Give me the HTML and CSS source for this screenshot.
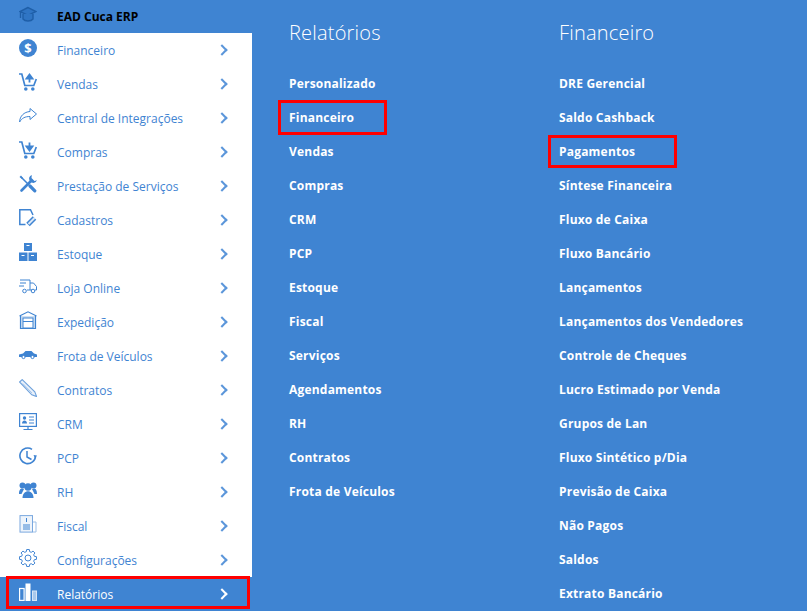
FILE: index.html
```html
<!DOCTYPE html>
<html lang="en">
<head>
  <meta charset="UTF-8" />
  <title>EAD Cuca ERP</title>
  <link rel="stylesheet" href="styles.css">
</head>
<body>
  <div class="app">
    <aside class="sidebar">
      <div class="brand">
        <svg class="ico brand-ico" viewBox="0 0 18 18"><path d="M9 1.500 1 5.500 9 9.500l8-4z" fill="#2f75c4" stroke="currentColor" stroke-width="1.400"/><path d="M4 8v5c2 2.600 8 2.600 10 0V8" fill="#2f75c4" stroke="currentColor" stroke-width="1.400"/><path d="M1.500 6v6" stroke="currentColor" stroke-width="1.400"/></svg>
        <span>EAD Cuca ERP</span>
      </div>
      <nav class="menu">
        <a class="item"><svg class="ico" viewBox="0 0 18 18"><circle cx="9" cy="9" r="9" fill="currentColor"/><text x="9" y="13.500" class="dollar">$</text></svg><span class="label">Financeiro</span><i class="chev"></i></a>
        <a class="item"><svg class="ico" viewBox="0 0 18 18"><path d="M0 1h2.800l3 11.500h9L17.300 6" fill="none" stroke="currentColor" stroke-width="1.700"/><path d="M10.500 9.500V5M7.500 5.500 10.500 1.500l3 4z" fill="currentColor" stroke="currentColor" stroke-width="1.800"/><circle cx="6.800" cy="16" r="1.800" fill="currentColor"/><circle cx="13.800" cy="16" r="1.800" fill="currentColor"/></svg><span class="label">Vendas</span><i class="chev"></i></a>
        <a class="item"><svg class="ico" viewBox="0 0 18 18"><path d="M11 1.500 17.500 7 11 12.500V9.500C6 9.500 3 11 .6 15 .8 9 5 5 11 4.500z" fill="none" stroke="currentColor" stroke-width="1"/></svg><span class="label">Central de Integrações</span><i class="chev"></i></a>
        <a class="item"><svg class="ico" viewBox="0 0 18 18"><path d="M0 1h2.800l3 11.500h9L17.300 6" fill="none" stroke="currentColor" stroke-width="1.700"/><path d="M10.500 1.500V6M7.500 5.500l3 4 3-4z" fill="currentColor" stroke="currentColor" stroke-width="1.800"/><circle cx="6.800" cy="16" r="1.800" fill="currentColor"/><circle cx="13.800" cy="16" r="1.800" fill="currentColor"/></svg><span class="label">Compras</span><i class="chev"></i></a>
        <a class="item"><svg class="ico" viewBox="0 0 18 18"><path d="M2 2 10 10" stroke="currentColor" stroke-width="1.600"/><path d="M11 11 15.800 15.800" stroke="currentColor" stroke-width="3.200" stroke-linecap="round"/><path d="M12.500 5.500 2.500 15.500" stroke="currentColor" stroke-width="2.600" stroke-linecap="round"/><path d="M.5 2 2 .5 4 3 3 4z" fill="currentColor"/><path d="M12.800 0A4.300 4.300 0 0 0 10.500 5.500L12.500 7.500A4.300 4.300 0 0 0 18 5.200L15.500 6 12.500 3z" fill="currentColor"/></svg><span class="label">Prestação de Serviços</span><i class="chev"></i></a>
        <a class="item"><svg class="ico" viewBox="0 0 18 18"><path d="M6.500 15.500H.8V.8H11.500L14 6" fill="none" stroke="currentColor" stroke-width="1.500"/><path d="M9 15.500 15.500 9" stroke="currentColor" stroke-width="5"/><path d="M9.500 15 15.500 9" stroke="#dbe8f7" stroke-width="2"/></svg><span class="label">Cadastros</span><i class="chev"></i></a>
        <a class="item"><svg class="ico" viewBox="0 0 18 18"><rect x="5" width="8" height="8" fill="currentColor"/><rect y="9.500" width="8.500" height="8.500" fill="currentColor"/><rect x="9.500" y="9.500" width="8.500" height="8.500" fill="currentColor"/><path d="M7.500 2.500h3M2.500 12.500h3M12 12.500h3" stroke="#fff" stroke-width="1.200"/></svg><span class="label">Estoque</span><i class="chev"></i></a>
        <a class="item"><svg class="ico" viewBox="0 0 18 18"><path d="M1 3h10v10H8M11 6h3.500L17.500 9.500V13H16M11 13h2" fill="none" stroke="currentColor" stroke-width="1"/><path d="M1 6h6M0 9h5" stroke="currentColor" stroke-width="1.200"/><circle cx="5.500" cy="14" r="1.800" fill="none" stroke="currentColor"/><circle cx="14" cy="14" r="1.800" fill="none" stroke="currentColor"/></svg><span class="label">Loja Online</span><i class="chev"></i></a>
        <a class="item"><svg class="ico" viewBox="0 0 18 18"><path d="M.5 5 9 .8 17.500 5" fill="none" stroke="currentColor" stroke-width="1.200"/><path d="M1.500 5v12.500h15V5" fill="#cfe0f3" stroke="currentColor" stroke-width="1.200"/><rect x="4" y="7" width="10" height="10" fill="#fff" stroke="currentColor"/><path d="M4 10.500h10" stroke="currentColor"/></svg><span class="label">Expedição</span><i class="chev"></i></a>
        <a class="item"><svg class="ico" viewBox="0 0 18 18"><path d="M0 12V9.500L4 8.500 6.500 6h6l2.500 2.500 3 1V12z" fill="currentColor"/><circle cx="4.500" cy="12" r="1.600" fill="#fff" stroke="currentColor"/><circle cx="13.500" cy="12" r="1.600" fill="#fff" stroke="currentColor"/></svg><span class="label">Frota de Veículos</span><i class="chev"></i></a>
        <a class="item"><svg class="ico" viewBox="0 0 18 18"><path d="M.6 3 3.200.6 15.800 12.800l1.800 4.800-4.800-1.800z" fill="#eaf1fa" stroke="#6fa2dc" stroke-width="1.100"/><path d="M3.800 4.500 13 14" stroke="#a9c8ec"/></svg><span class="label">Contratos</span><i class="chev"></i></a>
        <a class="item"><svg class="ico" viewBox="0 0 18 18"><rect x=".6" y=".6" width="16.800" height="12.800" fill="none" stroke="currentColor" stroke-width="1.200"/><circle cx="5.500" cy="5" r="1.700" fill="currentColor"/><path d="M3 10.500c0-4 5-4 5 0z" fill="currentColor"/><path d="M10 4h5M10 7h5M10 10h5" stroke="currentColor"/><path d="M4.500 16.500h9M9 13.500v3" stroke="currentColor" stroke-width="1.200"/></svg><span class="label">CRM</span><i class="chev"></i></a>
        <a class="item"><svg class="ico" viewBox="0 0 18 18"><path d="M16.500 9A7.800 7.800 0 1 1 13 2.300" fill="none" stroke="currentColor" stroke-width="1.600"/><path d="M8 4v6l4.500 2.500" fill="none" stroke="currentColor" stroke-width="1.500"/><path d="M14.500 8 18 8.500 16 11z" fill="currentColor"/></svg><span class="label">PCP</span><i class="chev"></i></a>
        <a class="item"><svg class="ico" viewBox="0 0 18 18"><circle cx="9" cy="6" r="3.700" fill="currentColor"/><circle cx="3.500" cy="4.500" r="3" fill="currentColor"/><circle cx="14.500" cy="4.500" r="3" fill="currentColor"/><path d="M3.500 17c0-9 11-9 11 0z" fill="currentColor"/><path d="M0 13c0-6 3-6 5-5L2.500 13zM18 13c0-6-3-6-5-5l2.500 5z" fill="currentColor"/></svg><span class="label">RH</span><i class="chev"></i></a>
        <a class="item"><svg class="ico" viewBox="0 0 18 18"><path d="M14 7h3v10H14" fill="none" stroke="#9dc0e8"/><rect x="1" y=".6" width="12.500" height="16.500" fill="#eef4fb" stroke="#7aa8df"/><path d="M7.500 3v4M4 10h7M4 12h7M4 14h7" stroke="currentColor"/></svg><span class="label">Fiscal</span><i class="chev"></i></a>
        <a class="item"><svg class="ico" viewBox="-1 0 20 20"><circle cx="9" cy="10" r="3.300" fill="none" stroke="currentColor" stroke-width="1.100"/><path d="M7.500.6h3l.4 2.400 1.700.7 2-1.400 2.100 2.100-1.400 2 .7 1.700 2.400.4v3l-2.400.4-.7 1.700 1.400 2-2.100 2.100-2-1.400-1.700.7-.4 2.400h-3l-.4-2.400-1.700-.7-2 1.400-2.100-2.100 1.400-2-.7-1.700-2.400-.4v-3l2.400-.4.7-1.700-1.400-2 2.100-2.100 2 1.400 1.700-.7z" fill="none" stroke="currentColor" stroke-width="1.100"/></svg><span class="label">Configurações</span><i class="chev"></i></a>
        <a class="item active marked"><svg class="ico" viewBox="0 0 18 18"><rect x=".6" y="5.500" width="4.500" height="11.900" fill="none" stroke="#fff" stroke-width="1.200"/><rect x="6.500" y=".5" width="5" height="17.500" fill="#fff"/><rect x="13.500" y="8" width="4" height="9.500" fill="#a9c8ec" stroke="#d7e5f6"/></svg><span class="label">Relatórios</span><i class="chev"></i></a>
      </nav>
    </aside>

    <main class="panel">
      <section class="col col-first">
        <h2>Relatórios</h2>
        <ul>
          <li>Personalizado</li>
          <li class="marked mark-first">Financeiro</li>
          <li>Vendas</li>
          <li>Compras</li>
          <li>CRM</li>
          <li>PCP</li>
          <li>Estoque</li>
          <li>Fiscal</li>
          <li>Serviços</li>
          <li>Agendamentos</li>
          <li>RH</li>
          <li>Contratos</li>
          <li>Frota de Veículos</li>
        </ul>
      </section>
      <section class="col">
        <h2>Financeiro</h2>
        <ul>
          <li>DRE Gerencial</li>
          <li>Saldo Cashback</li>
          <li class="marked mark-second">Pagamentos</li>
          <li>Síntese Financeira</li>
          <li>Fluxo de Caixa</li>
          <li>Fluxo Bancário</li>
          <li>Lançamentos</li>
          <li>Lançamentos dos Vendedores</li>
          <li>Controle de Cheques</li>
          <li>Lucro Estimado por Venda</li>
          <li>Grupos de Lan</li>
          <li>Fluxo Sintético p/Dia</li>
          <li>Previsão de Caixa</li>
          <li>Não Pagos</li>
          <li>Saldos</li>
          <li>Extrato Bancário</li>
        </ul>
      </section>
    </main>
  </div>
</body>
</html>
```

FILE: styles.css
```css
html, body { margin: 0; padding: 0; height: 100%; overflow: hidden; }
body { font-family: "Open Sans", sans-serif; background: #3f84d2; }

.app { display: flex; height: 611px; overflow: hidden; }

.sidebar { width: 252px; flex: none; background: #fff; }
.brand { height: 33px; display: flex; align-items: center; padding-left: 19px; background: #3f84d2; color: #000; font-size: 12px; font-weight: 700; }
.brand span { margin-left: 20px; }
.brand-ico { color: #1f5fa8; margin-top: -6px; }

.menu { display: flex; flex-direction: column; }
.item { position: relative; height: 34px; display: flex; align-items: center; padding-left: 19px; color: #3f84d2; font-size: 12px; }
.ico { width: 18px; height: 18px; flex: none; margin-top: -4px; }
.dollar { font: 700 13px "Open Sans", sans-serif; fill: #fff; text-anchor: middle; }
.label { margin-left: 20px; flex: 1; }
.chev { width: 6px; height: 6px; margin-right: 26px; border-top: 2px solid #5b96da; border-right: 2px solid #5b96da; transform: rotate(45deg); }

.item.active { background: #3f84d2; color: #fff; }
.item.active .chev { border-color: #fff; }

.marked { position: relative; }
.marked::after { content: ""; position: absolute; border: 3px solid #f00; box-sizing: border-box; }
.item.marked::after { left: 6px; right: 2px; top: -1px; bottom: 2px; }

.panel { flex: 1; display: flex; padding-left: 37px; color: #fff; }
.col { width: 270px; flex: none; }
.col h2 { margin: 0; height: 67px; padding-top: 19px; box-sizing: border-box; font-size: 20px; font-weight: 300; line-height: 28px; letter-spacing: .2px; }
.col ul { margin: 0; padding: 0; list-style: none; }
.col li { height: 34px; line-height: 34px; font-size: 12px; font-weight: 700; letter-spacing: .2px; }
.mark-first::after { left: -11px; width: 109px; top: -1px; height: 35px; }
.mark-second::after { left: -11px; width: 129px; top: 0; height: 33px; }
```
